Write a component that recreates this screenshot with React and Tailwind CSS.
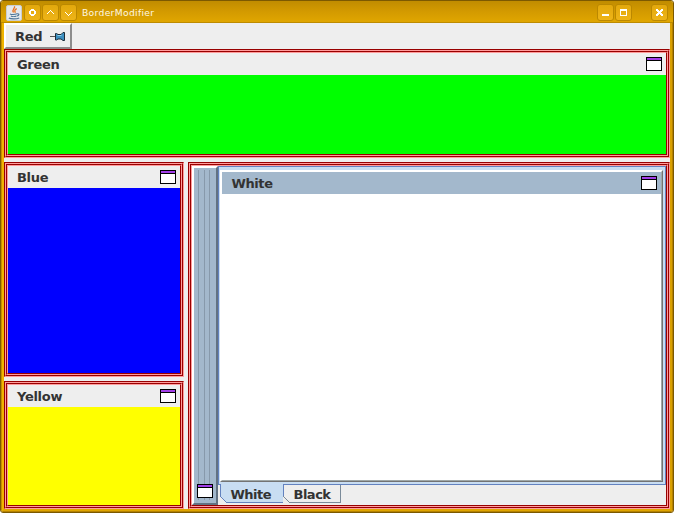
import React from "react";

function Etched({ className = "", children }) {
  return (
    <div className={"flex min-w-0 border border-t-[#980000] border-l-[#980000] border-r-[#ff9c9c] border-b-[#ff9c9c] " + className}>
      <div className="flex min-w-0 flex-1 border border-t-[#ff9c9c] border-l-[#ff9c9c] border-r-[#980000] border-b-[#980000]">
        <div className="flex min-w-0 flex-1 border border-t-[#980000] border-l-[#980000] border-r-[#ff9c9c] border-b-[#ff9c9c]">
          <div className="flex min-w-0 flex-1 border border-t-[#ff9c9c] border-l-[#ff9c9c] border-r-[#980000] border-b-[#980000]">
            {children}
          </div>
        </div>
      </div>
    </div>
  );
}

function WindowIcon() {
  return (
    <svg width="16" height="14" viewBox="0 0 16 14" shapeRendering="crispEdges" className="block shrink-0">
      <rect width="16" height="14" fill="#000" />
      <rect x="1" y="1" width="14" height="2" fill="#a23fe8" />
      <rect x="1" y="4" width="14" height="9" fill="#fff" />
    </svg>
  );
}

function Dock({ title, color, className = "" }) {
  return (
    <Etched className={className}>
      <div className="flex flex-1 flex-col">
        <div className="flex h-[22px] items-center justify-between bg-[#eee] pl-[9px] pr-1">
          <span className="pt-[2px]">{title}</span>
          <WindowIcon />
        </div>
        <div className={"flex-1 " + color} />
      </div>
    </Etched>
  );
}

function FrameButton({ className = "", children }) {
  return (
    <div className={"h-[17px] w-[17px] shrink-0 rounded-[3px] border border-[#bb8800] bg-linear-to-b from-[#e2a80c] to-[#eeb418] " + className}>
      <svg width="15" height="15" viewBox="0 0 15 15" shapeRendering="crispEdges" fill="#fff" className="block">
        {children}
      </svg>
    </div>
  );
}

function JavaLogo() {
  return (
    <svg width="16" height="16" viewBox="0 0 16 16" className="mt-[1px] block shrink-0">
      <rect x="0.5" y="0.5" width="15" height="15" rx="1.5" fill="#e4e8ec" stroke="#c9cdd0" />
      <path d="M8.5 1.2c1 2.2-3.2 3-1 6.3M10.8 3.6c-2.4 1.2-2.4 2.2-1.4 4.2" fill="none" stroke="#e87422" strokeWidth="1.3" />
      <path d="M4 8.8c1 1 5 1 7 0M5 11c1 .7 4 .7 5.5 0M2.8 13c2 1.2 8 1.2 10.4 0M11 8.8c3-.4 2 2 0 2.2" fill="none" stroke="#4f7698" strokeWidth="1.1" />
    </svg>
  );
}

function TitleBar() {
  return (
    <div className="flex h-[22px] shrink-0 border-b border-[#bd8b00] bg-linear-to-b from-[#c08c00] via-[#d39a00] to-[#e0a600] pl-[5px] pr-[5px] pt-[3px]">
      <JavaLogo />
      <FrameButton className="ml-[2px]">
        <path d="M6 4h3v1h1v1h1v3h-1v1h-1v1h-3v-1h-1v-1h-1v-3h1v-1h1zM6 6v3h3v-3z" fillRule="evenodd" />
      </FrameButton>
      <FrameButton className="ml-[1px]">
        <path d="M4 8h1v-1h1v-1h1v-1h1v1h1v1h1v1h1v1h-1v-1h-1v-1h-1v-1h-1v1h-1v1h-1v1h-1z" />
      </FrameButton>
      <FrameButton className="ml-[1px]">
        <path d="M4 7h1v1h1v1h1v1h1v-1h1v-1h1v-1h1v1h-1v1h-1v1h-1v1h-1v-1h-1v-1h-1v-1h-1z" />
      </FrameButton>
      <span className="ml-[5px] pt-[2px] font-['DejaVu_Sans'] text-[9.2px] font-normal leading-[13px] tracking-[0.32px] text-[#fff8e0]">BorderModifier</span>
      <div className="ml-auto flex">
        <FrameButton>
          <path d="M4 9h7v2h-7z" />
        </FrameButton>
        <FrameButton className="ml-[1px]">
          <path d="M4 4h7v7h-7zM5 6v4h5v-4z" fillRule="evenodd" />
        </FrameButton>
        <FrameButton className="ml-[19px]">
          <path d="M4 4h2v1h1v1h1v-1h1v-1h2v2h-1v1h-1v1h1v1h1v2h-2v-1h-1v-1h-1v1h-1v1h-2v-2h1v-1h1v-1h-1v-1h-1z" />
        </FrameButton>
      </div>
    </div>
  );
}

function Pin() {
  return (
    <svg width="15" height="10" viewBox="0 0 15 10" className="block">
      <path d="M0 4.5h5" stroke="#555" shapeRendering="crispEdges" />
      <path d="M5.5 1.5h1l1.5 1h3l2-2h1.5v8h-1.5l-2-1.5h-3l-1.5 1h-1z" fill="#3d8fc0" stroke="#1c2c38" />
      <path d="M7.5 3.5h4" stroke="#8fd0ee" />
    </svg>
  );
}

function Tab({ label, selected, className = "" }) {
  return (
    <div
      className={
        "relative flex border-b border-r " +
        (selected ? "-mt-px h-[19px] border-l border-[#6382bf] bg-[#c8ddf2] pl-[9px] pt-[3px] " : "h-[18px] border-[#7a8a99] pl-[9px] pt-[2px] ") +
        className
      }
    >
      <span className="ml-[0.5px] tracking-[-0.5px]">{label}</span>
      <svg width="7" height="7" viewBox="0 0 7 7" shapeRendering="crispEdges" className="absolute -bottom-px -left-px">
        <path d="M0 0v7h7z" fill="#eee" />
        <path d="M0 0h1v1h1v1h1v1h1v1h1v1h1v1h1v1h-1v-1h-1v-1h-1v-1h-1v-1h-1v-1h-1v-1h-1z" fill={selected ? "#6382bf" : "#7a8a99"} />
      </svg>
    </div>
  );
}

function StripGrooves() {
  return (
    <>
      <div className="w-px bg-[#8799ab]" />
      <div className="ml-[5px] w-px bg-[#8799ab]" />
      <div className="ml-[4px] w-px bg-[#8799ab]" />
    </>
  );
}

function SideStrip() {
  return (
    <div className="flex w-[26px] shrink-0 flex-col border-2 border-b-[#627282] border-l-white border-r-[#627282] border-t-white bg-[#a3b8cc]">
      <div className="mt-[2px] flex flex-1 pl-[4px]">
        <StripGrooves />
      </div>
      <div className="pl-[3px]">
        <WindowIcon />
      </div>
      <div className="flex h-[5px] pb-[3px] pl-[4px]">
        <StripGrooves />
      </div>
    </div>
  );
}

function TabbedPane() {
  return (
    <div className="flex min-w-0 flex-1 flex-col bg-[#eee]">
      <div className="flex h-[319px] border border-[#6382bf] bg-[#c8ddf2] pb-[2px] pl-[1px] pr-[2px] pt-[3px]">
        <div className="flex flex-1 border border-b-[#737373] border-l-white border-r-[#737373] border-t-white">
          <div className="flex flex-1 flex-col border border-b-[#a0a8a8] border-l-white border-r-[#a0a8a8] border-t-white bg-white">
            <div className="flex h-[22px] items-center justify-between bg-[#a3b8cc] pl-[9.5px] pr-[4px]">
              <span className="pt-[2px] tracking-[-0.4px]">White</span>
              <WindowIcon />
            </div>
          </div>
        </div>
      </div>
      <div className="flex pl-[2px]">
        <Tab label="White" selected className="w-[64px]" />
        <Tab label="Black" className="w-[57px]" />
      </div>
    </div>
  );
}

export default function App() {
  return (
    <div className="h-[513px] w-[674px] bg-white">
      <div className="flex h-[513px] w-[674px] flex-col overflow-hidden rounded-[3px] border border-[#7c5900] bg-[#eee] font-['DejaVu_Sans'] text-[13px] font-bold leading-[16px] tracking-[-0.3px] text-[#333]">
        <TitleBar />
        <div className="flex flex-1 border-x border-b border-b-[#b58100] border-l-[#c48f00] border-r-[#b58100]">
          <div className="flex flex-1 flex-col border-x-2 border-b-2 border-l-[#f0b400] border-r-[#d9a000] border-b-[#dfa500]">
            <div className="h-[26px]">
              <div className="flex h-[26px] w-[68px] items-center gap-[8px] border-2 border-b-[#8c8c8c] border-l-white border-r-[#8c8c8c] border-t-white pl-[9px] pt-[2px]">
                <span>Red</span>
                <Pin />
              </div>
            </div>
            <Dock title="Green" color="bg-[#0f0]" className="h-[109px]" />
            <div className="mt-[4px] flex h-[347px] gap-[4px]">
              <div className="flex w-[180px] flex-col gap-[4px]">
                <Dock title="Blue" color="bg-[#00f]" className="h-[215px]" />
                <Dock title="Yellow" color="bg-[#ff0]" className="h-[128px]" />
              </div>
              <Etched className="flex-1">
                <SideStrip />
                <TabbedPane />
              </Etched>
            </div>
          </div>
        </div>
      </div>
    </div>
  );
}
